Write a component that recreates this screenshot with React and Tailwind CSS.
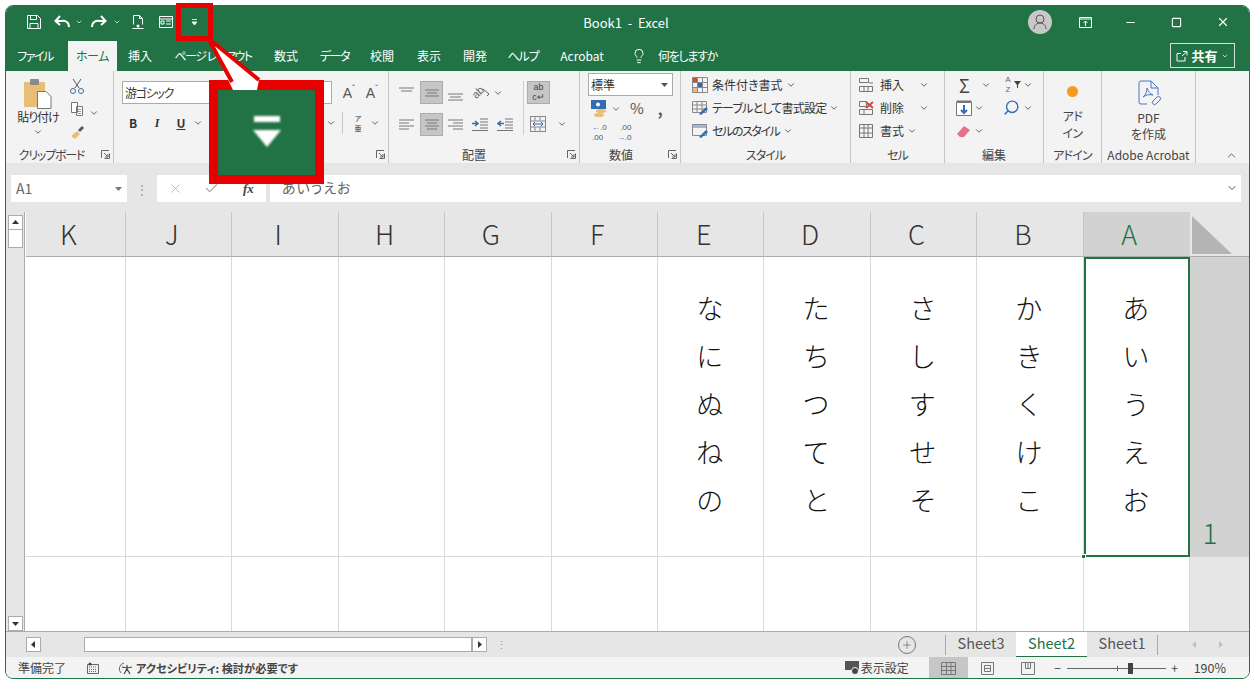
import React from "react";
import { ChevronDown, ChevronUp, Minus, Square, X, Check, Plus, Search, Lightbulb } from "lucide-react";

const Chev = ({ className = "" }) => <ChevronDown size={10} strokeWidth={2} className={"text-[#444] shrink-0 " + className} />;

const Svg = ({ w = 16, h = 16, children, className = "" }) => (
  <svg width={w} height={h} viewBox={`0 0 ${w} ${h}`} fill="none" className={"shrink-0 " + className}>{children}</svg>
);

// three or more horizontal lines, used by the alignment buttons
const Lines = ({ rows, w = 16 }) => (
  <Svg w={w} h={16}>
    {rows.map(([x1, x2, y], i) => <path key={i} d={`M${x1} ${y}H${x2}`} stroke="#777" />)}
  </Svg>
);

const Launcher = () => (
  <Svg w={9} h={9}>
    <path d="M.5 8V.5H8M8.500 3.500V8.500H3.500M3 3l4 4M7 4v3H4" stroke="#666" />
  </Svg>
);

const Group = ({ w, label, launcher, children, labelClass = "" }) => (
  <div style={{ width: w }} className="h-[92px] flex flex-col shrink-0 border-r border-[#c6c6c6] relative">
    <div className="h-[74px] shrink-0">{children}</div>
    <div className={"flex-1 flex items-center justify-center text-[12px] leading-none text-[#444] pt-[1px] " + labelClass}>{label}</div>
    {launcher && <div className="absolute right-[3px] bottom-[4px] flex"><Launcher /></div>}
  </div>
);

const WideRow = ({ icon, text, textClass = "" }) => (
  <div className="h-[23px] flex items-center text-[12px] text-[#333] whitespace-nowrap">
    <div className="w-[18px] flex justify-center mr-[3px]">{icon}</div>
    <span className={textClass}>{text}</span>
    <Chev className="ml-[3px]" />
  </div>
);

const tabs = [
  ["ファイル", 62, "tracking-[-1.5px] pr-[4px]"], ["ホーム", 49, "tracking-[-0.5px]"], ["挿入", 46, ""],
  ["ページ レイアウト", 100, "tracking-[-1.5px]"], ["数式", 46, ""], ["データ", 51, "tracking-[-1.5px]"],
  ["校閲", 44, ""], ["表示", 50, ""], ["開発", 42, ""], ["ヘルプ", 54, "tracking-[-1px]"], ["Acrobat", 64, ""],
];

const columns = ["K", "J", "I", "H", "G", "F", "E", "D", "C", "B", "A"];
const cellText = {
  E: ["な", "に", "ぬ", "ね", "の"],
  D: ["た", "ち", "つ", "て", "と"],
  C: ["さ", "し", "す", "せ", "そ"],
  B: ["か", "き", "く", "け", "こ"],
  A: ["あ", "い", "う", "え", "お"],
};

const ScrollBtn = ({ d, className = "" }) => (
  <div className={"w-[15px] h-[15px] bg-white border border-[#ababab] flex items-center justify-center shrink-0 " + className}>
    <svg width="7" height="7" viewBox="0 0 7 7"><path d={d} fill="#333" /></svg>
  </div>
);

function Ribbon() {
  return (
    <div className="h-[92px] bg-[#f3f3f3] flex shrink-0">
      <Group w={108} label="クリップボード" launcher labelClass="pr-[16px] tracking-[-1.2px]">
        <div className="flex pl-[9px] pt-[6px]">
          <div className="w-[46px] flex flex-col items-center">
            <Svg w={30} h={32}>
              <rect x="1" y="5" width="21" height="25" rx="1" fill="#e8bd75" />
              <rect x="7" y="2" width="9" height="6" rx="1" fill="#8a8a8a" />
              <path d="M14.500 14.500H23l5 5V31.500H14.500z" fill="#fff" stroke="#777" />
            </Svg>
            <span className="text-[12px] leading-[14px] text-[#333] mt-[1px] whitespace-nowrap tracking-[-1px]">貼り付け</span>
            <Chev className="mt-[3px]" />
          </div>
          <div className="flex flex-col items-center w-[24px] ml-[4px] gap-[7px] pt-[1px]">
            <Svg w={16} h={16}>
              <path d="M4 1l6 9M12 1L6 10" stroke="#555" />
              <circle cx="4" cy="13" r="2.500" stroke="#3a6ea5" />
              <circle cx="12" cy="13" r="2.500" stroke="#3a6ea5" />
            </Svg>
            <Svg w={16} h={16}>
              <path d="M2.500 1.500h6v10h-6zM7.500 5.500h6v9h-6z" fill="#fff" stroke="#777" />
              <path d="M9 8.500h3M9 10.500h3M9 12.500h3" stroke="#999" />
            </Svg>
            <Svg w={16} h={16}>
              <path d="M2 12l6-5 3 3-5 5z" fill="#e8bd75" />
              <path d="M9 6l4-4 2 2-4 4z" fill="#555" />
            </Svg>
          </div>
          <Chev className="mt-[31px]" />
        </div>
      </Group>

      <Group w={275} launcher label="">
        <div className="pt-[10px] pl-[8px]">
          <div className="flex items-center h-[23px]">
            <div className="w-[210px] h-[23px] bg-white border border-[#ababab] text-[12px] leading-[21px] pl-[2px] text-[#333] tracking-[-1.3px]">游ゴシック</div>
            <div className="flex gap-[8px] ml-[8px] text-[14px] leading-none text-[#555] font-['Liberation_Sans']">
              <span className="w-[15px] relative text-center">A<span className="absolute right-0 top-[-2px] text-[9px] leading-none text-[#3a6ea5]">ˆ</span></span>
              <span className="w-[15px] relative text-center">A<span className="absolute right-0 top-[-2px] text-[9px] leading-none text-[#3a6ea5]">ˇ</span></span>
            </div>
          </div>
          <div className="flex items-center h-[24px] mt-[7px] text-[12px] text-[#333]">
            <b className="w-[20px] text-center ml-[1px]">B</b>
            <i className="w-[28px] text-center font-['Liberation_Serif'] font-bold">I</i>
            <b className="w-[20px] text-center underline">U</b>
            <Chev className="ml-[2px]" />
            <div className="w-[120px]" />
            <Chev className="ml-[3px]" />
            <div className="w-px h-[22px] bg-[#c6c6c6] ml-[6px]" />
            <span className="w-[14px] text-center text-[7px] leading-[10px] ml-[8px]">ア<br />亜</span>
            <Chev className="ml-[5px]" />
          </div>
        </div>
      </Group>

      <Group w={191} label="配置" launcher labelClass="pr-[20px]">
        <div className="flex pt-[10px] pl-[10px]">
          <div className="flex flex-col">
            <div className="flex items-center h-[23px]">
              <Lines rows={[[0, 15, 3], [2, 13, 6]]} />
              <div className="w-[23px] h-[23px] bg-[#c6c6c6] border border-[#ababab] ml-[5px] flex items-center justify-center"><Lines w={14} rows={[[0, 14, 5], [2, 12, 8], [0, 14, 11]]} /></div>
              <div className="ml-[5px]"><Lines rows={[[0, 15, 9], [2, 13, 12], [0, 15, 15]]} /></div>
              <div className="w-[18px] ml-[8px] flex items-center relative">
                <span className="-rotate-45 text-[11px] leading-none text-[#666] font-['Liberation_Sans']">ab</span>
                <Svg w={8} h={10} className="-ml-[1px]"><path d="M0 1l6 5-2 2" stroke="#666" /></Svg>
              </div>
              <Chev className="ml-[3px]" />
            </div>
            <div className="flex items-center h-[24px] mt-[8px]">
              <Lines rows={[[0, 15, 4], [0, 10, 7], [0, 15, 10], [0, 10, 13]]} />
              <div className="w-[23px] h-[23px] bg-[#c6c6c6] border border-[#ababab] ml-[5px] flex items-center justify-center"><Lines w={14} rows={[[0, 14, 4], [2, 12, 7], [0, 14, 10], [2, 12, 13]]} /></div>
              <div className="ml-[5px]"><Lines rows={[[0, 15, 4], [5, 15, 7], [0, 15, 10], [5, 15, 13]]} /></div>
              <Svg w={16} h={16} className="ml-[8px]">
                <path d="M8 3h8M8 6h8M8 9h8M8 12h8M0 14.500h16" stroke="#777" />
                <path d="M0 7.500h5M3 5l3 2.500L3 10" stroke="#2f6db5" strokeWidth="1.500" />
              </Svg>
              <Svg w={16} h={16} className="ml-[9px]">
                <path d="M8 3h8M8 6h8M8 9h8M8 12h8M0 14.500h16" stroke="#777" />
                <path d="M7 7.500H1M4 5L1 7.500 4 10" stroke="#2f6db5" strokeWidth="1.500" />
              </Svg>
            </div>
          </div>
          <div className="w-px h-[54px] bg-[#d0d0d0] ml-[10px] shrink-0" />
          <div className="flex flex-col ml-[3px]">
            <div className="w-[23px] h-[23px] bg-[#c6c6c6] border border-[#ababab] text-[9px] leading-[10px] text-[#444] text-center font-['Liberation_Sans']">ab<br />c↵</div>
            <div className="flex items-center h-[24px] mt-[8px] ml-[3px]">
              <Svg w={17} h={18}>
                <rect x=".5" y="1.500" width="15" height="15" stroke="#888" />
                <path d="M.5 6h15M.5 12h15M5 1.500v4M10 1.500v4M5 12v4M10 12v4" stroke="#888" />
                <path d="M3 9h10M5 7L3 9l2 2M11 7l2 2-2 2" stroke="#2f6db5" />
              </Svg>
              <Chev className="ml-[10px]" />
            </div>
          </div>
        </div>
      </Group>

      <Group w={101} label="数値" launcher labelClass="pr-[18px]">
        <div className="pl-[8px] pt-[2px]">
          <div className="w-[85px] h-[23px] bg-white border border-[#ababab] flex items-center justify-between pl-[2px] pr-[4px] text-[12px] text-[#333]">
            標準
            <svg width="7" height="4" viewBox="0 0 7 4"><path d="M0 0h7L3.500 4z" fill="#555" /></svg>
          </div>
          <div className="flex items-center h-[23px] mt-[1px] pl-[2px] text-[#555]">
            <Svg w={18} h={20}>
              <rect x="1" y="1" width="15" height="9" fill="#2f6db5" />
              <circle cx="8" cy="5.500" r="2" fill="#fff" />
              <ellipse cx="11" cy="12" rx="5" ry="2" fill="#e8bd75" />
              <ellipse cx="9" cy="16" rx="5" ry="2" fill="#e8bd75" />
            </Svg>
            <Chev className="ml-[3px]" />
            <span className="text-[15px] ml-[9px]">%</span>
            <span className="text-[15px] font-bold ml-[14px] leading-none">,</span>
          </div>
          <div className="flex items-center h-[26px] pl-[4px] text-[8px] leading-[10px] text-[#555] gap-[10px] font-['Liberation_Sans']">
            <span className="whitespace-nowrap"><span className="text-[#2f6db5]">←</span>.0<br />.00</span>
            <span className="whitespace-nowrap text-right">.00<br /><span className="text-[#2f6db5]">→</span>.0</span>
          </div>
        </div>
      </Group>

      <Group w={170} label="スタイル" labelClass="tracking-[-1px]">
        <div className="pl-[10px] pt-[2px]">
          <WideRow text="条件付き書式" icon={<Svg w={16} h={16}><path d="M.5.5h15v15H.5zM.5 5.500h15M.5 10.500h15M5.500.5v15M10.500.5v15" stroke="#888" /><path d="M1 1h4v4H1z" fill="#d04a3a" /><path d="M6 6h4v4H6z" fill="#2f6db5" /><path d="M1 11h4v4H1z" fill="#e8bd75" /></Svg>} />
          <WideRow text="テーブルとして書式設定" textClass="tracking-[-0.8px]" icon={<Svg w={16} h={16}><path d="M.5 1.500h14v11H.5zM.5 5h14M.5 9h14M5 1.500v11M10 1.500v11" stroke="#888" /><path d="M7 14l7-7 2 2-7 6z" fill="#2f6db5" /></Svg>} />
          <WideRow text="セルのスタイル" textClass="tracking-[-1.4px]" icon={<Svg w={16} h={16}><path d="M.5 1.500h14v11H.5z" stroke="#888" /><path d="M1 2h13v3H1z" fill="#9db8d8" /><path d="M7 14l7-7 2 2-7 6z" fill="#2f6db5" /></Svg>} />
        </div>
      </Group>

      <Group w={94} label="セル" labelClass="tracking-[-1px]">
        <div className="pl-[7px] pt-[2px]">
          <div className="h-[23px] flex items-center text-[12px] text-[#333]">
            <Svg w={16} h={16}><path d="M1.500 1.500h9v4h-9zM1.500 9.500h13v5h-13zM6 9.500v5M10 9.500v5M11 6h4" stroke="#777" /></Svg>
            <span className="ml-[6px]">挿入</span><Chev className="ml-[15px]" />
          </div>
          <div className="h-[23px] flex items-center text-[12px] text-[#333]">
            <Svg w={16} h={16}><path d="M1.500 1.500h7v5h-7zM1.500 9.500h13v5h-13zM6 9.500v5" stroke="#777" /><path d="M8 2l7 6M15 2L8 8" stroke="#d04a3a" strokeWidth="2" /></Svg>
            <span className="ml-[6px]">削除</span><Chev className="ml-[15px]" />
          </div>
          <div className="h-[23px] flex items-center text-[12px] text-[#333]">
            <Svg w={16} h={16}><path d="M1.500 1.500h13v13h-13zM1.500 5h13M1.500 10h13M6 1.500v13M10 1.500v13" stroke="#777" /></Svg>
            <span className="ml-[6px]">書式</span><Chev className="ml-[3px]" />
          </div>
        </div>
      </Group>

      <Group w={99} label="編集">
        <div className="pl-[11px] pt-[2px]">
          <div className="h-[23px] flex items-center">
            <span className="w-[17px] text-[18px] leading-none text-[#444] text-center">Σ</span>
            <Chev className="ml-[8px]" />
            <span className="w-[16px] ml-[9px] text-[8px] leading-[9.500px] text-[#7a4fa8] text-center font-['Liberation_Sans']">A<br />Z</span>
            <svg width="7" height="7" viewBox="0 0 7 7" className="-ml-[2px]"><path d="M0 0h7L4 4v3H3V4z" fill="#444" /></svg>
            <Chev className="ml-[2px]" />
          </div>
          <div className="h-[23px] flex items-center">
            <Svg w={16} h={16}><path d="M.5 2.500h15v13H.5z" stroke="#777" fill="#fff" /><path d="M.5 1.500h15" stroke="#777" strokeWidth="2" /><path d="M8 5v8M5 10l3 3 3-3" stroke="#2f6db5" strokeWidth="2" /></Svg>
            <Chev className="ml-[2px]" />
            <Search size={17} strokeWidth={2} className="text-[#2f6db5] ml-[19px] -scale-x-100" />
            <Chev className="ml-[3px]" />
          </div>
          <div className="h-[23px] flex items-center">
            <Svg w={16} h={16}><path d="M1 11l7-8 6 4-6 7H4z" fill="#e2728a" /></Svg>
            <Chev className="ml-[2px]" />
          </div>
        </div>
      </Group>

      <Group w={58} label="アドイン" labelClass="tracking-[-0.8px]">
        <div className="flex flex-col items-center pt-[15px] text-[12px] leading-[17px] text-[#444] tracking-[-0.5px]">
          <div className="w-[11px] h-[11px] rounded-full bg-[#f59a23] mb-[10px]" />
          <span>アド</span>
          <span>イン</span>
        </div>
      </Group>

      <Group w={94} label="Adobe Acrobat" labelClass="whitespace-nowrap">
        <div className="flex flex-col items-center pt-[9px] text-[12px] leading-[16px] text-[#444]">
          <Svg w={26} h={28}>
            <path d="M11 24H5a2 2 0 0 1-2-2V3a2 2 0 0 1 2-2h10l7 7v7M15 1v7h7" stroke="#4a76c9" />
            <path d="M7 17c3-2 4-6 4-9 1 3 3 6 6 7-4-1-7 0-10 2z" stroke="#4a76c9" />
            <path d="M16 22l5-5a2 2 0 0 1 3 3l-4 4a2 2 0 0 1-3-3" stroke="#4a76c9" />
          </Svg>
          <span className="mt-[2px]">PDF</span>
          <span>を作成</span>
        </div>
      </Group>

      <div className="flex-1 flex items-end justify-end pr-[11px] pb-[1px]">
        <ChevronUp size={13} strokeWidth={1.500} className="text-[#444]" />
      </div>
    </div>
  );
}

function Sheet() {
  return (
    <div className="h-[419px] flex shrink-0 bg-white">
      <div className="w-[19px] bg-[#e6e6e6] flex flex-col items-center justify-between pt-[3px] shrink-0 pr-[1px]">
        <div className="flex flex-col">
          <ScrollBtn d="M0 5L3.500 1 7 5z" />
          <div className="w-[15px] h-[18px] bg-white border border-[#ababab] border-t-0" />
        </div>
        <ScrollBtn d="M0 2h7L3.500 6z" />
      </div>
      <div className="flex-1 grid grid-cols-[100px_repeat(10,106.4px)_1fr] grid-rows-[45px_300px_74px] relative border-l border-[#ababab] -ml-px pl-px">
        {columns.map((c) => (
          <div key={c} className={"border-b border-[#ababab] border-r flex items-center justify-center text-[27px] font-light pr-[14px] " + (c === "A" ? "bg-[#d2d2d2] text-[#217346] border-r-[#d2d2d2]" : "bg-[#e6e6e6] text-[#333] border-r-[#c6c6c6]")}>{c}</div>
        ))}
        <div className="bg-[#e6e6e6] border-b border-[#ababab] pl-[2px] pt-[4px]">
          <div className="w-[40px] h-[38px] bg-[#b4b4b4] [clip-path:polygon(0_0,100%_100%,0_100%)]" />
        </div>
        {columns.map((c) => (
          <div key={c} className={"flex flex-col items-center justify-center text-[27px] font-light leading-[48px] text-[#111] pb-[6px] pr-[2px] " + (c === "A" ? "border-2 border-[#217346]" : "border-r border-b border-[#d9d9d9]")}>
            {(cellText[c] || []).map((t) => <span key={t}>{t}</span>)}
          </div>
        ))}
        <div className="bg-[#d2d2d2] flex items-end justify-center pb-[5px] pr-[19px] text-[28px] font-light text-[#217346] leading-[40px]">1</div>
        {columns.map((c) => <div key={c} className="border-r border-[#d9d9d9]" />)}
        <div className="bg-[#e6e6e6]" />
        <div className="absolute left-[1056px] top-[342px] w-[5px] h-[5px] bg-[#217346] border border-white" />
      </div>
    </div>
  );
}

export default function App() {
  return (
    <div className="w-[1254px] h-[685px] bg-white relative overflow-hidden font-['Noto_Sans_CJK_JP',sans-serif] [font-feature-settings:'palt']">
      <div className="absolute left-[5px] top-[5px] w-[1245px] h-[674px] border border-[#217346] rounded-[8px] overflow-hidden flex flex-col">
        {/* title bar */}
        <div className="h-[32px] bg-[#217346] grid grid-cols-[1fr_auto_1fr] items-center text-white shrink-0">
          <div className="flex items-center pl-[16px]">
            <div className="w-[24px] flex justify-center">
              <Svg w={14} h={14}><path d="M.5.5h10l3 3v10H.5zM3.500.5v4h6v-4M3 13.500v-5h8v5" stroke="#fff" /></Svg>
            </div>
            <div className="w-[20px] ml-[6px] flex justify-center">
              <Svg w={16} h={14}><path d="M15 12c0-5-4-7-8-6H2M6 1L1.500 6 6 10" stroke="#fff" strokeWidth="2" /></Svg>
            </div>
            <div className="w-[14px] flex justify-center"><ChevronDown size={8} strokeWidth={2} /></div>
            <div className="w-[20px] ml-[3px] flex justify-center">
              <Svg w={16} h={14}><path d="M1 12c0-5 4-7 8-6h5M10 1l4.500 5L10 10" stroke="#fff" strokeWidth="2" /></Svg>
            </div>
            <div className="w-[16px] flex justify-center"><ChevronDown size={8} strokeWidth={2} /></div>
            <div className="w-[26px] flex justify-center">
              <Svg w={12} h={14}><path d="M1.500 9.500V.5h6l3 3v6M7.500.5v3h3M.5 13.500h11" stroke="#fff" /><circle cx="6" cy="11" r="1.500" fill="#fff" /></Svg>
            </div>
            <div className="w-[30px] flex justify-center">
              <Svg w={14} h={12}><path d="M.5.5h13v11H.5zM.5 3h13M7 5h5M7 8h5M2 5h3v3H2z" stroke="#fff" /></Svg>
            </div>
            <div className="w-[26px] flex justify-center">
              <Svg w={5} h={6}><path d="M0 .5h5M0 3h5L2.500 6z" stroke="#fff" strokeWidth=".8" fill="#fff" /></Svg>
            </div>
          </div>
          <div className="text-[13px] whitespace-pre pt-[1px] pr-[3px]">Book1  -  Excel</div>
          <div className="flex items-center justify-end pr-[19px]">
            <div className="w-[24px] h-[24px] rounded-full bg-[#c8c8c8] flex items-center justify-center mr-[27px]">
              <Svg w={14} h={16}><circle cx="7" cy="5" r="4" stroke="#555" /><path d="M1 15c0-4 3-6 6-6s6 2 6 6" stroke="#555" /></Svg>
            </div>
            <Svg w={13} h={11} className="mr-[32px]"><path d="M.5.5h12v10H.5zM.5 2h12M6.500 9V4M4.500 6l2-2 2 2" stroke="#fff" /></Svg>
            <Minus size={13} strokeWidth={2} className="mr-[34px]" />
            <Square size={11} strokeWidth={2.400} className="mr-[34px]" />
            <X size={14} strokeWidth={2} />
          </div>
        </div>

        {/* ribbon tabs */}
        <div className="h-[33px] bg-[#217346] flex items-end text-[12px] text-white shrink-0">
          {tabs.map(([t, w, cls]) => (
            <div key={t} style={{ width: w }} className={"h-[30px] flex items-center justify-center whitespace-nowrap " + cls + (t === "ホーム" ? " bg-[#f3f3f3] text-[#217346]" : "")}>{t}</div>
          ))}
          <Lightbulb size={16} strokeWidth={1.500} className="ml-[17px] mb-[7px]" />
          <span className="ml-[11px] h-[30px] flex items-center tracking-[-1.3px]">何をしますか</span>
          <div className="ml-auto mr-[14px] mb-[3px] w-[65px] h-[25px] border border-[#cfe0d6] flex items-center justify-center gap-[3px]">
            <Svg w={12} h={12}><path d="M7 1.500h4v4M11 1.500L6 6M9 7v4H1V3.500h4" stroke="#fff" /></Svg>
            <b className="text-[13px]">共有</b>
            <ChevronDown size={8} strokeWidth={2} />
          </div>
        </div>

        <Ribbon />

        {/* formula bar */}
        <div className="h-[49px] bg-[#e6e6e6] flex items-center pl-[5px] pr-[8px] pt-[2px] shrink-0 text-[#666]">
          <div className="w-[116px] h-[27px] bg-white flex items-center justify-between pl-[5px] pr-[5px] text-[14px]">
            A1
            <svg width="7" height="4" viewBox="0 0 7 4"><path d="M0 0h7L3.500 4z" fill="#777" /></svg>
          </div>
          <div className="w-[30px] flex justify-center text-[#999] text-[12px] leading-[16px]">⋮</div>
          <div className="w-[109px] h-[27px] bg-white flex items-center pl-[11px] text-[#aaa]">
            <X size={15} strokeWidth={1.200} />
            <Check size={15} strokeWidth={2} className="ml-[21px]" />
            <i className="ml-[24px] font-['Liberation_Serif'] text-[13px] text-[#444] font-bold">fx</i>
          </div>
          <div className="flex-1 h-[27px] ml-[4px] bg-white flex items-center justify-between pl-[12px] pr-[3px] pb-[2px] text-[14px] tracking-[1px]">
            あいうえお
            <ChevronDown size={12} strokeWidth={2} className="text-[#555]" />
          </div>
        </div>

        <Sheet />

        {/* sheet tabs */}
        <div className="h-[26px] bg-[#e6e6e6] border-t border-[#ababab] flex items-center pl-[20px] shrink-0 text-[14.500px] text-[#555]">
          <ScrollBtn d="M5 0v7L1 3.500z" />
          <div className="w-[43px]" />
          <div className="w-[388px] h-[15px] bg-white border border-[#ababab]" />
          <ScrollBtn d="M2 0v7l4-3.500z" />
          <div className="w-[29px] flex justify-center text-[#999] text-[11px]">⋮</div>
          <div className="w-[382px]" />
          <div className="w-[18px] h-[18px] rounded-full border border-[#777] flex items-center justify-center"><Plus size={12} strokeWidth={1.200} /></div>
          <div className="w-px h-[20px] bg-[#aaa] ml-[29px]" />
          <div className="w-[70px] text-center pb-[3px]">Sheet3</div>
          <div className="w-[71px] h-[26px] bg-white border-b-2 border-[#217346] text-[#217346] text-center leading-[21px]">Sheet2</div>
          <div className="w-[70px] text-center pb-[3px]">Sheet1</div>
          <div className="w-px h-[20px] bg-[#aaa]" />
          <div className="ml-[34px] flex gap-[23px]">
            <svg width="4" height="7" viewBox="0 0 4 7"><path d="M4 0v7L0 3.500z" fill="#c0c0c0" /></svg>
            <svg width="4" height="7" viewBox="0 0 4 7"><path d="M0 0v7l4-3.500z" fill="#c0c0c0" /></svg>
          </div>
        </div>

        {/* status bar */}
        <div className="flex-1 bg-[#f3f3f3] flex items-center pl-[12px] pr-[23px] text-[12px] text-[#444]">
          <span className="w-[69px]">準備完了</span>
          <Svg w={12} h={12}><path d="M.5 2.500h11v9H.5z" stroke="#666" /><path d="M2 5h8M2 7.500h8M2 9.500h8" stroke="#666" strokeDasharray="1 1" /><circle cx="3" cy="2" r="1.500" fill="#444" /></Svg>
          <Svg w={16} h={14} className="ml-[19px]"><path d="M6 2a6 6 0 0 0-3 10" stroke="#666" /><path d="M9 4v4M4 6l5 1 5-1M9 8l-3 5M9 8l3 5" stroke="#444" strokeWidth="1.200" /></Svg>
          <b className="ml-[2px] text-[11.200px] whitespace-nowrap">アクセシビリティ: 検討が必要です</b>
          <div className="flex-1" />
          <Svg w={16} h={14}><path d="M0 0h14v9H0z" fill="#555" /><circle cx="10" cy="10" r="3.500" fill="#444" stroke="#f3f3f3" /></Svg>
          <span className="w-[68px]">表示設定</span>
          <div className="w-[39px] h-[22px] bg-[#c6c6c6] flex items-center justify-center">
            <Svg w={15} h={13}><path d="M.5.5h14v12H.5zM.5 4.500h14M.5 8.500h14M5.500.5v12M10 .5v12" stroke="#777" /></Svg>
          </div>
          <div className="w-[40px] flex justify-center">
            <Svg w={13} h={13}><path d="M.5.5h12v12H.5zM3.500 3.500h6v6h-6zM3.500 6.500h6" stroke="#777" /></Svg>
          </div>
          <div className="w-[40px] flex justify-center">
            <Svg w={14} h={13}><path d="M.5.5h13v12H.5zM4.500.5v6h5v-6M7 .5v6" stroke="#777" /></Svg>
          </div>
          <span className="w-[10px] ml-[5px] text-center leading-none">−</span>
          <div className="w-[99px] h-[1px] bg-[#666] mx-[4px] relative">
            <div className="absolute left-[50px] -top-[2px] w-px h-[5px] bg-[#666]" />
            <div className="absolute left-[61px] -top-[5px] w-[5px] h-[11px] bg-[#444]" />
          </div>
          <span className="w-[10px] text-center leading-none">+</span>
          <span className="ml-[14px] text-[12.500px]">190%</span>
        </div>
      </div>

      {/* red callout over the window */}
      <div className="absolute left-[176px] top-[3px] w-[37px] h-[38px] border-[5px] border-[#e60000]" />
      <div className="absolute left-[209px] top-[80px] w-[115px] h-[104px] border-[9px] border-t-[10px] border-[#e60000] flex">
        <div className="flex-1 bg-[#217346] flex items-center justify-center">
          <svg width="30" height="34" viewBox="0 0 30 34" className="blur-[0.8px]"><path d="M2 3h26" stroke="#fff" strokeWidth="6" /><path d="M1 14h28L15 31z" fill="#fff" /></svg>
        </div>
      </div>
      <svg width="80" height="62" viewBox="0 0 80 62" className="absolute left-[195px] top-[36px]">
        <path d="M13 2L38 54H62L64 44z" fill="#fff" />
        <path d="M13 2L37 46M13 2L64 44" stroke="#e60000" strokeWidth="4" />
      </svg>
    </div>
  );
}
